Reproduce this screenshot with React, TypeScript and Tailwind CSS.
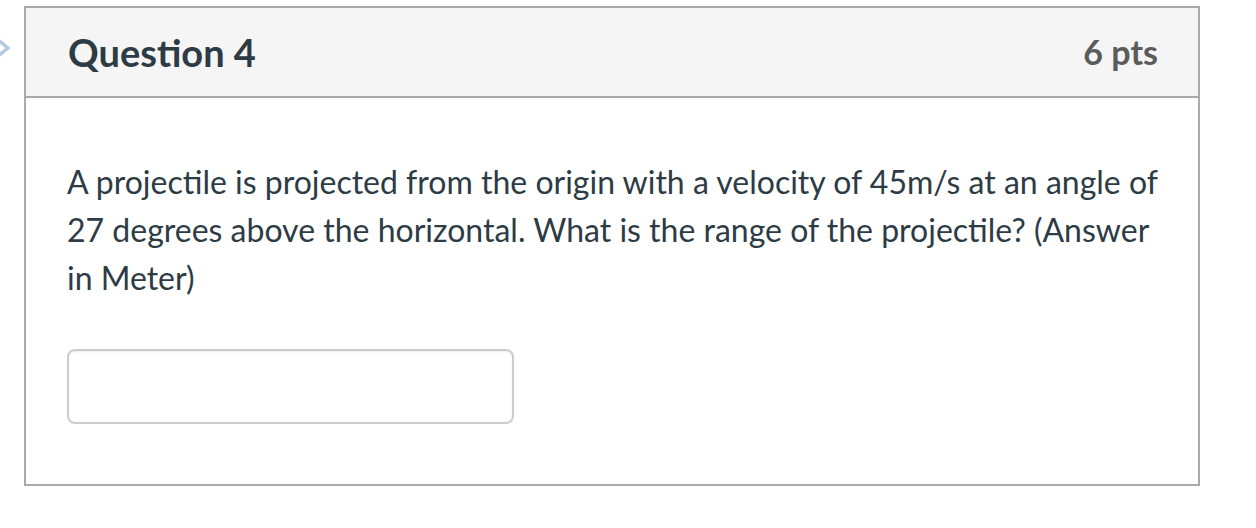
export default function App() {
  return (
    <div className="relative h-[528px] w-[1256px] bg-white font-['Lato','Noto_Sans',sans-serif] text-[#2d3b45]">
      {/* question flag chevron, clipped at the page edge */}
      <svg
        className="absolute left-0 top-[38px]"
        width="12"
        height="20"
        viewBox="0 0 12 20"
        fill="none"
      >
        <path d="M-2 2 L8 10 L-2 18" stroke="#b2cbe0" strokeWidth="3.5" />
      </svg>

      <div className="pl-[24px] pr-[56px] pt-[6px]">
        <div className="flex h-[480px] flex-col border-2 border-[#aaaaaa]">
          <div className="flex h-[90px] items-center justify-between border-b-2 border-[#aaaaaa] bg-[#f5f5f5] pl-[42px] pr-[40px]">
            <h2 className="text-[38px] font-bold leading-none">Question 4</h2>
            <span className="text-[34px] font-bold leading-none text-[#5b5b5b]">6 pts</span>
          </div>

          <div className="pl-[41px] pr-[32px] pt-[60px]">
            <p className="text-[32px] leading-[48px]">
              A projectile is projected from the origin with a velocity of 45m/s at an angle of 27 degrees above the horizontal. What is the range of the projectile? (Answer in Meter)
            </p>
            <input
              type="text"
              className="mt-[47px] block h-[75px] w-[447px] rounded-[8px] border-2 border-[#cccccc] bg-white shadow-[inset_0_1px_2px_rgba(0,0,0,0.08)] outline-none"
            />
          </div>
        </div>
      </div>
    </div>
  );
}
